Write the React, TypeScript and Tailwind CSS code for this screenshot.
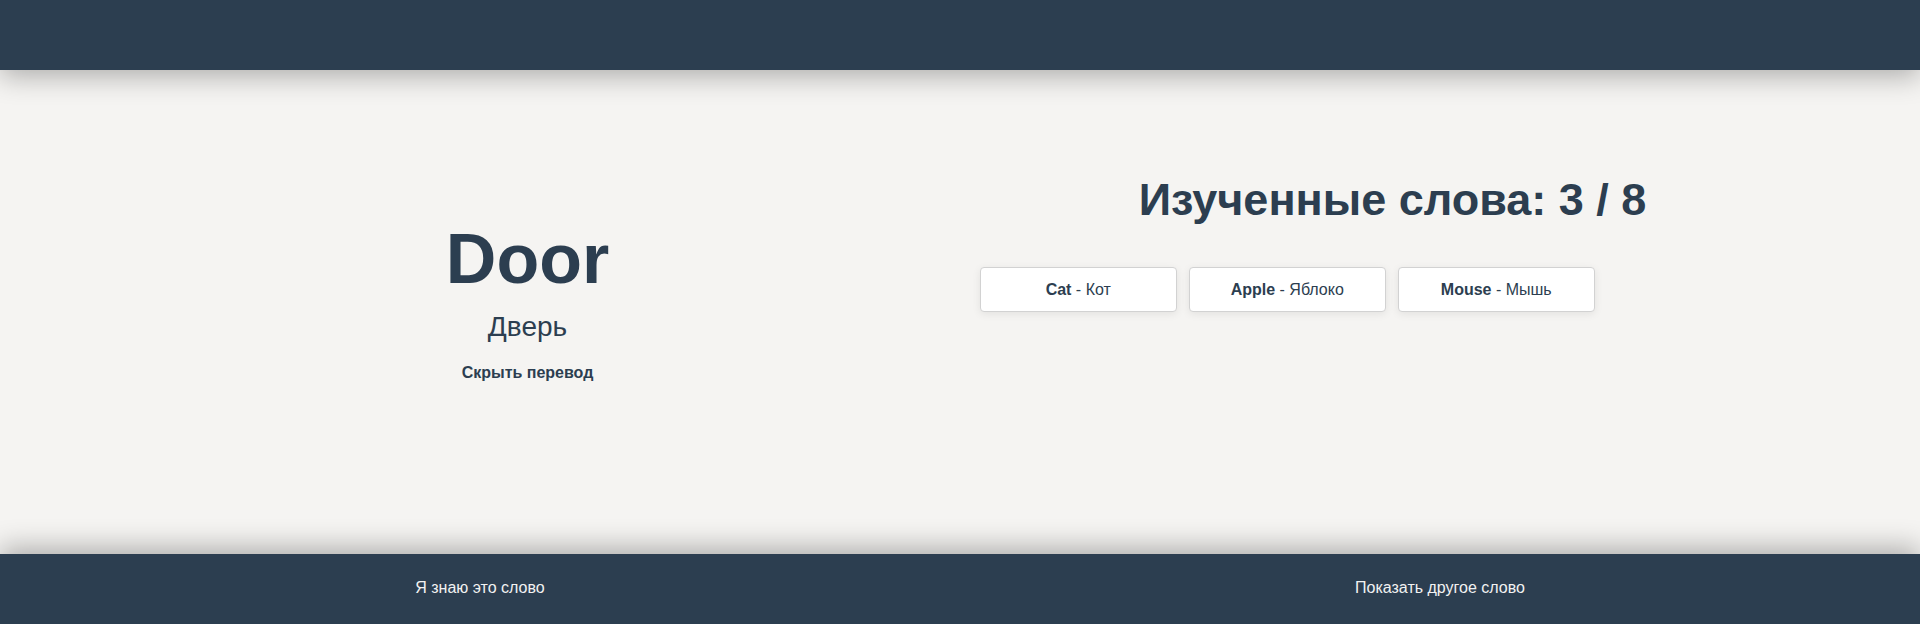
import React, { useState } from 'react';

type Word = { en: string; ru: string };

const learned: Word[] = [
  { en: 'Cat', ru: 'Кот' },
  { en: 'Apple', ru: 'Яблоко' },
  { en: 'Mouse', ru: 'Мышь' },
];

const App: React.FC = () => {
  const [showTranslation, setShowTranslation] = useState(true);

  return (
    <div
      className="flex h-[624px] w-full flex-col overflow-hidden bg-[#f5f4f2] text-[#2c3e50]"
      style={{ fontFamily: '"Liberation Sans", Arial, sans-serif' }}
    >
      <header className="relative z-10 h-[70px] shrink-0 bg-[#2c3e50] shadow-[0_6px_28px_rgba(0,0,0,0.3)]" />

      <main className="flex h-[484px] shrink-0 px-[95px]">
        <section className="flex flex-1 flex-col items-center pt-[154px]">
          <h1 className="text-[70px] font-bold leading-none">Door</h1>
          {showTranslation && <p className="mt-[19px] text-[28px] leading-none">Дверь</p>}
          <button
            onClick={() => setShowTranslation(!showTranslation)}
            className="mt-[24px] text-base font-bold leading-none text-[#2c3e50]"
          >
            {showTranslation ? 'Скрыть перевод' : 'Показать перевод'}
          </button>
        </section>

        <section className="flex flex-1 flex-col pt-[107px]">
          <h2 className="text-center text-[45px] font-bold leading-none">Изученные слова: 3 / 8</h2>
          <div className="mt-[45px] flex gap-[12.5px] pl-[20px]">
            {learned.map(w => (
              <div
                key={w.en}
                className="flex h-[45px] w-[196.5px] items-center justify-center rounded border border-[#d2d2d2] bg-white text-base shadow-[0_2px_8px_rgba(0,0,0,0.08)]"
              >
                <span className="font-bold">{w.en}</span>
                <span>&nbsp;- {w.ru}</span>
              </div>
            ))}
          </div>
        </section>
      </main>

      <footer className="relative z-10 flex h-[70px] shrink-0 bg-[#2c3e50] pb-[2px] text-base text-[#f2f2f2] shadow-[0_-6px_28px_rgba(0,0,0,0.3)]">
        <button className="flex flex-1 items-center justify-center">Я знаю это слово</button>
        <button className="flex flex-1 items-center justify-center">Показать другое слово</button>
      </footer>
    </div>
  );
};

export default App;
